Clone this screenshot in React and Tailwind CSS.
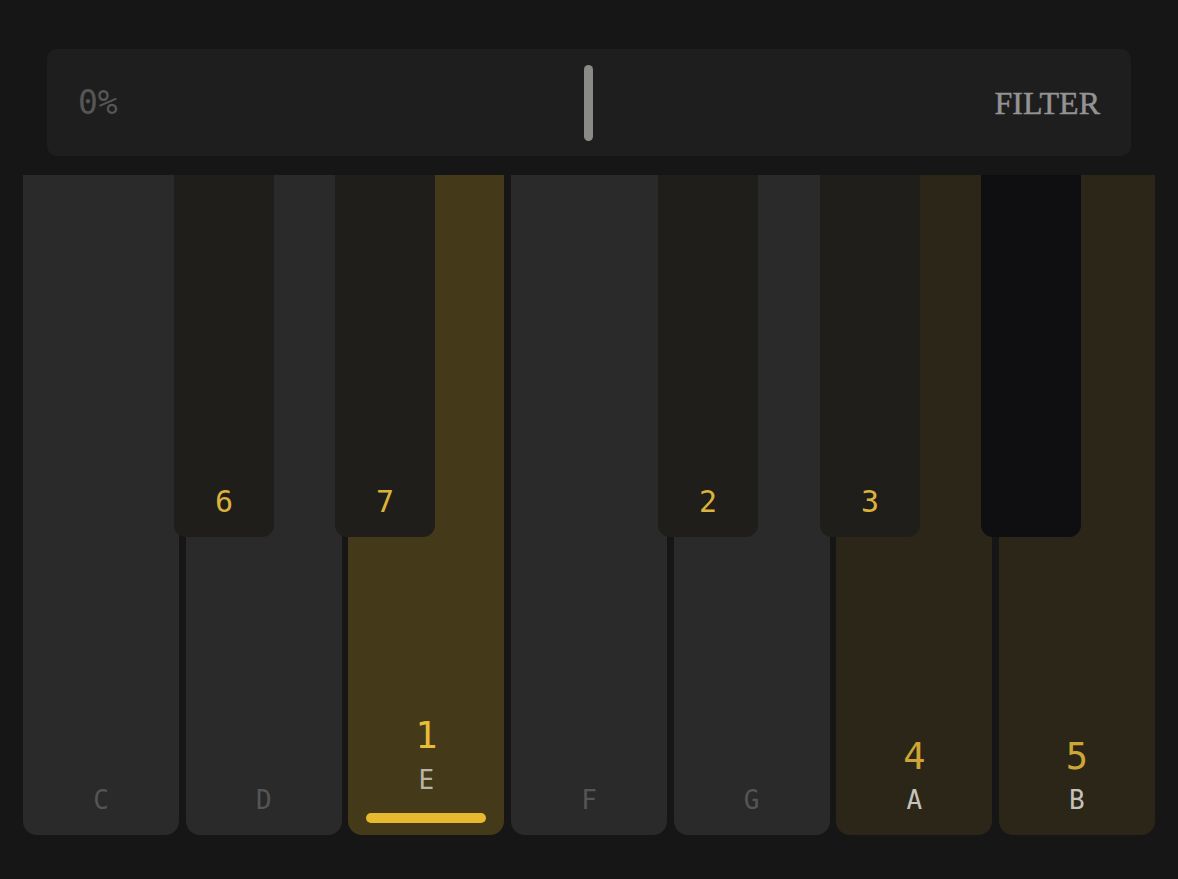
import React from "react";

const MONO = "font-['DejaVu_Sans_Mono',monospace]";

// белые клавиши: нота, цифра (если есть), состояние
const WHITE = [
  { note: "C", tone: "idle" },
  { note: "D", tone: "idle" },
  { note: "E", num: "1", tone: "active" },
  { note: "F", tone: "idle" },
  { note: "G", tone: "idle" },
  { note: "A", num: "4", tone: "scale" },
  { note: "B", num: "5", tone: "scale" },
];

// черные клавиши: позиция поверх белых
const BLACK = [
  { pos: "left-[151px]", num: "6" },
  { pos: "left-[312px]", num: "7" },
  { pos: "left-[635px]", num: "2" },
  { pos: "left-[797px]", num: "3" },
  { pos: "left-[958px]", dark: true },
];

function WhiteKey({ note, num, tone }) {
  const bg =
    tone === "active" ? "bg-[#443a1a]" : tone === "scale" ? "bg-[#2c2619]" : "bg-[#2a2a2a]";
  return (
    <div className={`flex-1 ${bg} rounded-b-[14px] flex flex-col items-center justify-end ${MONO}`}>
      {tone === "active" && (
        <>
          <div className="text-[37px] leading-none text-[#e8bd38]">{num}</div>
          <div className="mt-[13px] text-[26px] leading-none text-[#b9b4a6]">{note}</div>
          <div className="mt-[20px] mb-[12px] w-[120px] h-[10px] rounded-full bg-[#e8b92e]" />
        </>
      )}
      {tone === "scale" && (
        <>
          <div className="text-[37px] leading-none text-[#cfa535]">{num}</div>
          <div className="mt-[12px] mb-[22px] text-[26px] leading-none text-[#c4c2bc]">{note}</div>
        </>
      )}
      {tone === "idle" && (
        <div className="mb-[22px] text-[26px] leading-none text-[#555555]">{note}</div>
      )}
    </div>
  );
}

export default function App() {
  return (
    <div className="min-h-[879px] w-full bg-[#161616] px-[23px] pt-[49px]">
      <div className="relative mx-[24px] h-[107px] rounded-[10px] bg-[#1e1e1e] flex items-center justify-between pl-[31px] pr-[31px]">
        <span className={`text-[33px] text-[#565656] ${MONO}`}>0%</span>
        <div className="absolute left-[537px] top-[16px] w-[9px] h-[76px] rounded-full bg-[#8a8a87]" />
        <span className="text-[32px] text-[#939393] font-['Liberation_Serif',serif] [-webkit-text-stroke:0.5px_#939393]">
          FILTER
        </span>
      </div>

      <div className="relative mt-[19px] h-[660px] flex gap-[6.5px]">
        {WHITE.map((k) => (
          <WhiteKey key={k.note} {...k} />
        ))}
        {BLACK.map((b) => (
          <div
            key={b.pos}
            className={`absolute top-0 ${b.pos} w-[100px] h-[362px] rounded-b-[12px] flex items-end justify-center pb-[20px] ${
              b.dark ? "bg-[#0f0e10]" : "bg-[#1f1e1a]"
            }`}
          >
            {b.num && (
              <span className={`text-[30px] leading-none text-[#dcb33a] ${MONO}`}>{b.num}</span>
            )}
          </div>
        ))}
      </div>
    </div>
  );
}
